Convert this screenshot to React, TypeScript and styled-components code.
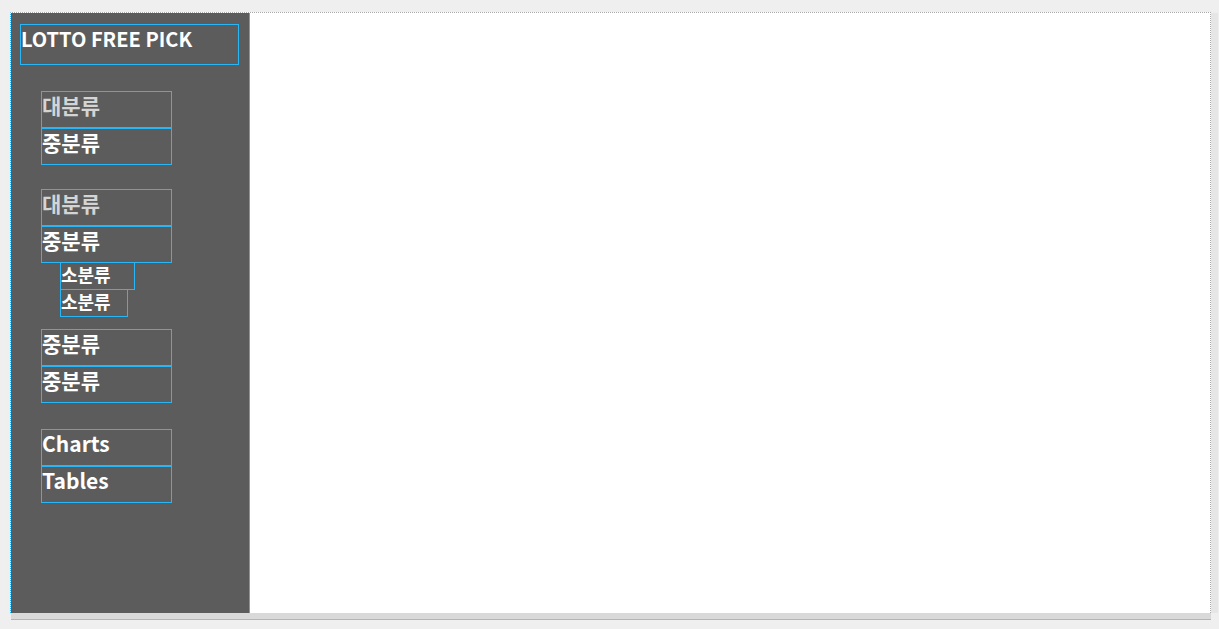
import React from 'react';
import styled, { createGlobalStyle } from 'styled-components';

const GlobalStyle = createGlobalStyle`
  body {
    margin: 0;
    background-color: #efefef;
    font-family: "Noto Sans CJK KR", "Noto Sans", sans-serif;
  }
`

const StyledStage = styled.div`
  display: flex;
  flex-direction: column;
  padding: 12px 0 0 10px;
  height: 629px;
  box-sizing: border-box;
`
const StyledFrameRow = styled.div`
  display: flex;
`
const StyledFrame = styled.div`
  display: flex;
  width: 1201px;
  height: 601px;
  box-sizing: border-box;
  border: 1px dotted #a9a9a9;
  border-left: 1px dotted #29b6f6;
  border-bottom: none;
  background: #ffffff;
`
const StyledScrollStrip = styled.div`
  width: 7px;
  margin-top: 1px;
  background-color: #e6e6e6;
`
const StyledBottomBar = styled.div`
  width: 1200px;
  margin-left: 1px;
  height: 6px;
  background-color: #d9d9d9;
  border-bottom: 1px solid #b4b4b4;
`
const StyledSidebar = styled.nav`
  display: flex;
  flex-direction: column;
  width: 239px;
  box-sizing: border-box;
  padding: 11px 10px 0 9px;
  background-color: #5c5c5c;
  border-right: 1px solid #29b6f6;
`
const StyledTitle = styled.div`
  height: 39px;
  border: 1px solid #29b6f6;
  color: #ffffff;
  font-size: 20px;
  font-weight: 700;
  line-height: 27px;
`
const StyledGroup = styled.ul<{ $top: number }>`
  list-style: none;
  margin: ${p => p.$top}px 0 0 21px;
  padding: 0;
  display: flex;
  flex-direction: column;
  align-items: flex-start;
`
const StyledItem = styled.li<{ $dim?: boolean }>`
  width: 129px;
  height: 35px;
  border: 1px solid #29b6f6;
  color: ${p => (p.$dim ? '#d4d4d4' : '#ffffff')};
  font-size: 21px;
  font-weight: 700;
  line-height: 26px;
  white-space: nowrap;
`
const StyledSubList = styled.ul`
  list-style: none;
  margin: 0 0 0 19px;
  padding: 0;
  display: flex;
  flex-direction: column;
  align-items: flex-start;
`
const StyledSubItem = styled.li<{ $w: number }>`
  width: ${p => p.$w}px;
  height: 26px;
  margin-top: -1px;
  border: 1px solid #29b6f6;
  color: #ffffff;
  font-size: 18px;
  font-weight: 700;
  line-height: 22px;
  white-space: nowrap;
`
const StyledContent = styled.main`
  flex: 1;
  background: #ffffff;
`

export default function App() {
  return <StyledStage>
    <GlobalStyle/>
    <StyledFrameRow>
      <StyledFrame>
        <StyledSidebar>
          <StyledTitle>LOTTO FREE PICK</StyledTitle>

          <StyledGroup $top={26}>
            <StyledItem $dim>대분류</StyledItem>
            <StyledItem>중분류</StyledItem>
          </StyledGroup>

          <StyledGroup $top={24}>
            <StyledItem $dim>대분류</StyledItem>
            <StyledItem>중분류</StyledItem>
            <StyledSubList>
              <StyledSubItem $w={73}>소분류</StyledSubItem>
              <StyledSubItem $w={66}>소분류</StyledSubItem>
            </StyledSubList>
          </StyledGroup>

          <StyledGroup $top={12}>
            <StyledItem>중분류</StyledItem>
            <StyledItem>중분류</StyledItem>
          </StyledGroup>

          <StyledGroup $top={26}>
            <StyledItem>Charts</StyledItem>
            <StyledItem>Tables</StyledItem>
          </StyledGroup>
        </StyledSidebar>
        <StyledContent/>
      </StyledFrame>
      <StyledScrollStrip/>
    </StyledFrameRow>
    <StyledBottomBar/>
  </StyledStage>
}
